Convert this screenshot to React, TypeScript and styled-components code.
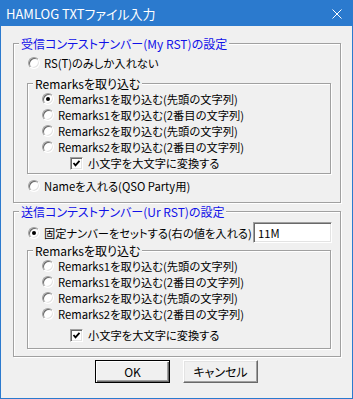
import React from 'react'
import styled, { createGlobalStyle } from 'styled-components'

const GlobalStyle = createGlobalStyle`
    html, body {
        margin: 0;
        padding: 0;
        background: #f0f0f0;
    }
    body {
        font-family: "Noto Sans CJK JP", "Noto Sans", sans-serif;
        font-size: 12px;
        font-feature-settings: "palt";
        color: #000;
    }
`

const Window = styled.div`
    width: 353px;
    height: 399px;
    box-sizing: border-box;
    border: 1px solid #2b7ace;
    background: #f0f0f0;
    display: flex;
    flex-direction: column;
`

const TitleBar = styled.div`
    height: 25px;
    flex: none;
    background: #2b7ace;
    color: #fff;
    display: flex;
    align-items: center;
    padding-left: 5px;
    font-size: 13px;
`

const TitleText = styled.span`
    flex: 1;
    line-height: 25px;
`

const CloseIcon = styled.svg`
    width: 10px;
    height: 10px;
    margin-right: 10px;
`

const Client = styled.div`
    flex: 1;
    padding: 10px 11px 0 12px;
    display: flex;
    flex-direction: column;
`

type GroupProps = { $top?: number; $pb: number; $ml?: number; $mr?: number }

const GroupBox = styled.fieldset<GroupProps>`
    margin: ${p => p.$top ?? 0}px ${p => p.$mr ?? 0}px 0 ${p => p.$ml ?? 0}px;
    padding: 0 0 ${p => p.$pb}px 0;
    min-width: 0;
    border: 1px solid #a0a0a0;
    box-shadow: inset 1px 1px 0 #fff, 1px 1px 0 #fff;
    display: flex;
    flex-direction: column;
`

const Legend = styled.legend<{ $blue?: boolean }>`
    margin-left: 5px;
    padding: 0 2px;
    height: 15px;
    line-height: 15px;
    background: #f0f0f0;
    font-size: 12px;
    color: ${p => (p.$blue ? '#1010e8' : '#000')};
    white-space: nowrap;
`

const Row = styled.label<{ $indent: number; $top?: number; $h?: number; $pr?: number }>`
    display: flex;
    align-items: center;
    height: ${p => p.$h ?? 16}px;
    margin: ${p => p.$top ?? 0}px 0 0 ${p => p.$indent}px;
    padding-right: ${p => p.$pr ?? 0}px;
    font-size: 11.25px;
    white-space: nowrap;
`

const RadioMark = styled.span`
    width: 12px;
    height: 12px;
    flex: none;
    box-sizing: border-box;
    border-radius: 50%;
    border: 1px solid;
    border-color: #a0a0a0 #fff #fff #a0a0a0;
    box-shadow: inset 1px 1px 0 #696969, inset -1px -1px 0 #e3e3e3;
    background: #fff;
    display: flex;
    align-items: center;
    justify-content: center;
    margin-right: 4px;
`

const Dot = styled.span`
    width: 4px;
    height: 4px;
    border-radius: 50%;
    background: #000;
`

const CheckMark = styled.span`
    width: 13px;
    height: 13px;
    flex: none;
    box-sizing: border-box;
    border: 1px solid;
    border-color: #a0a0a0 #fff #fff #a0a0a0;
    box-shadow: inset 1px 1px 0 #696969, inset -1px -1px 0 #e3e3e3;
    background: #fff;
    display: flex;
    align-items: center;
    justify-content: center;
    margin-right: 5px;
`

const EditBox = styled.input`
    flex: none;
    margin-left: auto;
    width: 79px;
    height: 21px;
    box-sizing: border-box;
    border: 1px solid;
    border-color: #a0a0a0 #fff #fff #a0a0a0;
    box-shadow: inset 1px 1px 0 #696969, inset -1px -1px 0 #e3e3e3;
    background: #fff;
    padding: 0 0 0 4px;
    font: inherit;
    font-size: 11.25px;
    color: #000;
    outline: none;
`

const ButtonRow = styled.div`
    display: flex;
    justify-content: center;
    gap: 13px;
    margin-top: 3px;
    padding-right: 1px;
`

const Button = styled.button<{ $default?: boolean }>`
    width: 75px;
    height: 23px;
    box-sizing: border-box;
    background: #f0f0f0;
    font: inherit;
    font-size: 12px;
    color: #000;
    padding: 0;
    border: 1px solid;
    border-color: ${p => (p.$default ? '#000' : '#fff #696969 #696969 #fff')};
    box-shadow: ${p =>
        p.$default
            ? 'inset 1px 1px 0 #fff, inset -1px -1px 0 #696969, inset -2px -2px 0 #a0a0a0'
            : 'inset -1px -1px 0 #a0a0a0, inset 1px 1px 0 #e3e3e3'};
`

const Radio: React.FC<{ checked?: boolean }> = ({ checked }) => (
    <RadioMark>{checked && <Dot />}</RadioMark>
)

const Check: React.FC = () => (
    <CheckMark>
        <svg width="9" height="9" viewBox="0 0 9 9">
            <polyline points="1.5,4 3.5,6.3 7.5,1.8" fill="none" stroke="#000" strokeWidth="1.8" />
        </svg>
    </CheckMark>
)

const remarkOptions = [
    'Remarks1を取り込む(先頭の文字列)',
    'Remarks1を取り込む(2番目の文字列)',
    'Remarks2を取り込む(先頭の文字列)',
    'Remarks2を取り込む(2番目の文字列)',
]

type RemarksProps = { checkedIndex: number; pb: number; top: number; checkTop: number }

// inner "Remarksを取り込む" box, used by both the receive and send groups
const RemarksGroup: React.FC<RemarksProps> = ({ checkedIndex, pb, top, checkTop }) => (
    <GroupBox $pb={pb} $ml={13} $mr={9} $top={top}>
        <Legend>Remarksを取り込む</Legend>
        {remarkOptions.map((label, i) => (
            <Row key={label} $indent={14}>
                <Radio checked={i === checkedIndex} />
                {label}
            </Row>
        ))}
        <Row $indent={42} $top={checkTop}>
            <Check />
            小文字を大文字に変換する
        </Row>
    </GroupBox>
)

export default function App() {
    return (
        <>
            <GlobalStyle />
            <Window>
                <TitleBar>
                    <TitleText>HAMLOG TXTファイル入力</TitleText>
                    <CloseIcon viewBox="0 0 10 10">
                        <path d="M0.5 0.5 L9.5 9.5 M9.5 0.5 L0.5 9.5" stroke="#fff" strokeWidth="1" />
                    </CloseIcon>
                </TitleBar>
                <Client>
                    <GroupBox $pb={8}>
                        <Legend $blue>受信コンテストナンバー(My RST)の設定</Legend>
                        <Row $indent={14} $top={4}>
                            <Radio />
                            RS(T)のみしか入れない
                        </Row>
                        <RemarksGroup checkedIndex={0} pb={2} top={5} checkTop={0} />
                        <Row $indent={14} $top={4}>
                            <Radio />
                            Nameを入れる(QSO Party用)
                        </Row>
                    </GroupBox>

                    <GroupBox $pb={7} $top={1}>
                        <Legend $blue>送信コンテストナンバー(Ur RST)の設定</Legend>
                        <Row $indent={14} $top={3} $h={21} $pr={8}>
                            <Radio checked />
                            固定ナンバーをセットする(右の値を入れる)
                            <EditBox value="11M" readOnly />
                        </Row>
                        <RemarksGroup checkedIndex={-1} pb={5} top={0} checkTop={5} />
                    </GroupBox>

                    <ButtonRow>
                        <Button $default>OK</Button>
                        <Button>キャンセル</Button>
                    </ButtonRow>
                </Client>
            </Window>
        </>
    )
}
